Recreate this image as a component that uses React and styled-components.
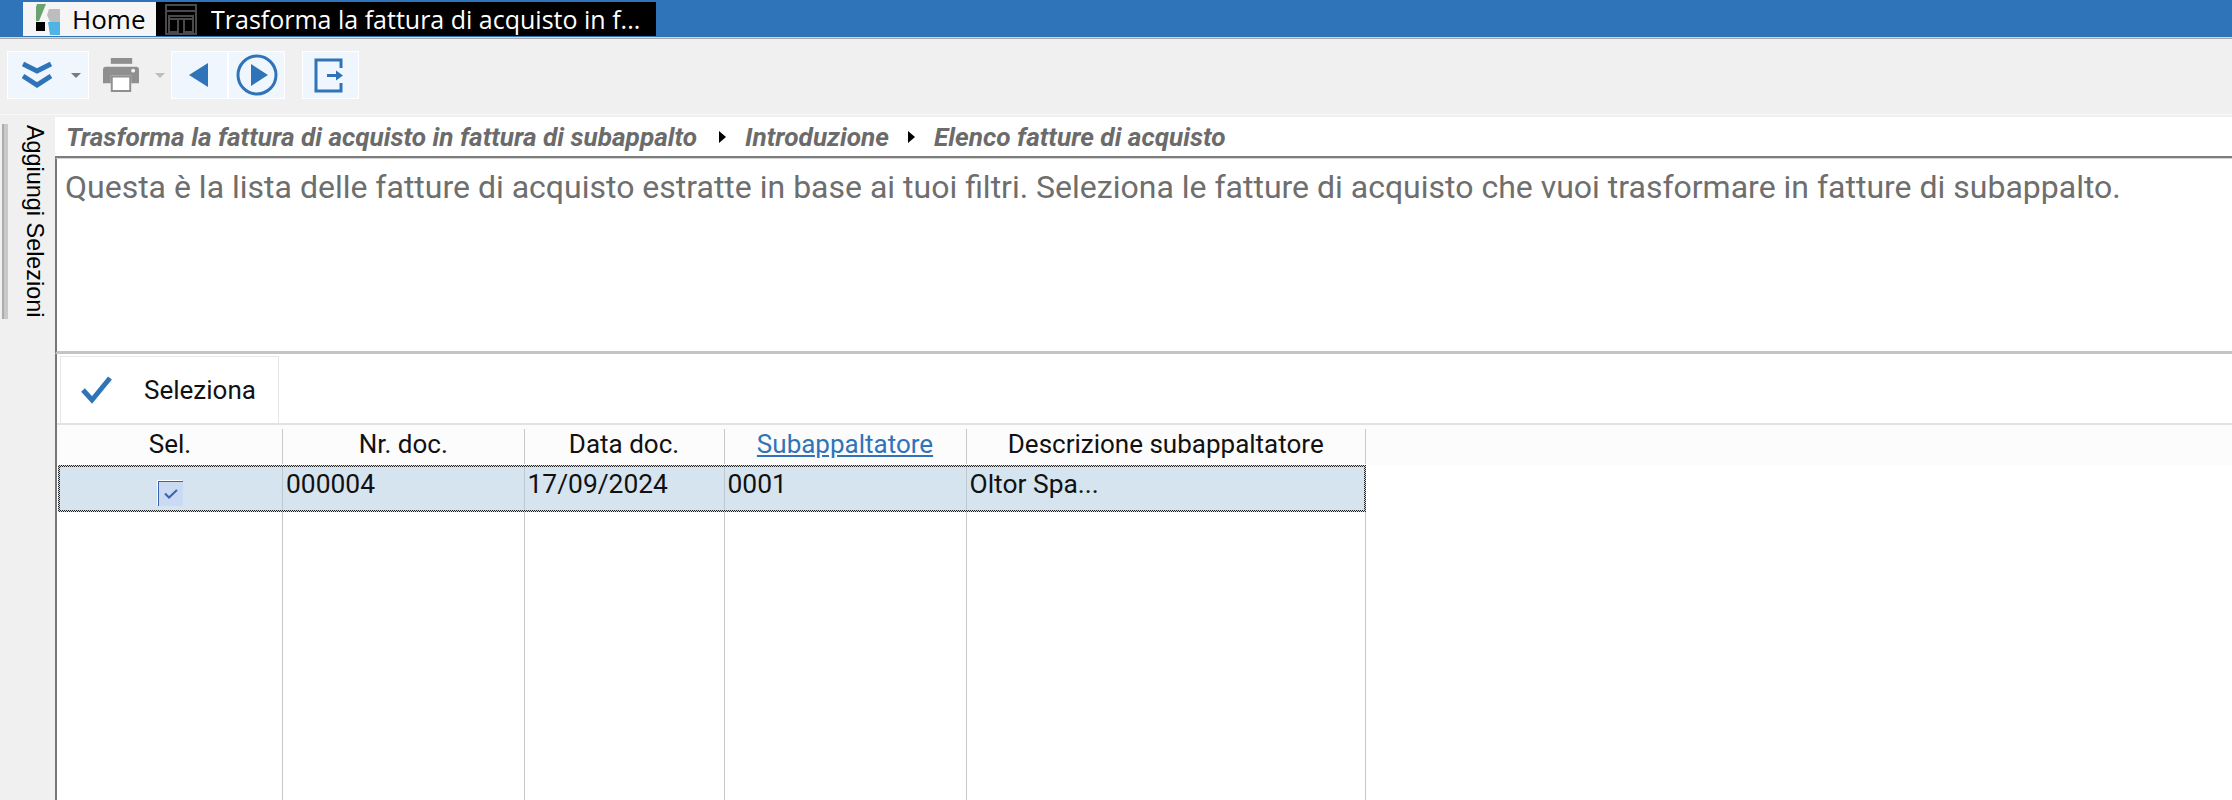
import React from "react";
import styled, { createGlobalStyle } from "styled-components";

const GlobalStyle = createGlobalStyle`
  html, body {
    margin: 0;
    padding: 0;
    height: 800px;
    overflow: hidden;
    background: #f0f0f0;
  }
`;

const Page = styled.div`
  width: 2232px;
  height: 800px;
  display: flex;
  flex-direction: column;
  background: #f0f0f0;
  font-family: Roboto, sans-serif;
`;

const TabBar = styled.div`
  height: 38px;
  flex: none;
  box-sizing: border-box;
  padding: 2px 0 1px 23px;
  display: flex;
  background: #2f74b9;
  border-bottom: 1px solid #d8d8d8;
`;

const Tab = styled.div`
  display: flex;
  align-items: center;
  box-sizing: border-box;
  width: ${(p) => p.$width}px;
  padding-left: ${(p) => p.$pad}px;
  gap: ${(p) => p.$gap}px;
  background: ${(p) => (p.$dark ? "#000" : "#f5f5f5")};
  color: ${(p) => (p.$dark ? "#fff" : "#000")};
  font-family: "Open Sans", sans-serif;
  font-size: ${(p) => p.$size}px;
  white-space: nowrap;
`;

const ToolBar = styled.div`
  height: 77px;
  flex: none;
  box-sizing: border-box;
  padding: 12px 0 0 7px;
  display: flex;
  align-items: flex-start;
  background: #f0f0f0;
  border-top: 1px solid #a8a8a8;
  border-bottom: 1px solid #f8f8f8;
`;

const ToolButton = styled.div`
  width: ${(p) => p.$width}px;
  height: 48px;
  margin-left: ${(p) => p.$left || 0}px;
  padding-left: ${(p) => p.$shift || 0}px;
  padding-right: ${(p) => p.$back || 0}px;
  flex: none;
  box-sizing: border-box;
  display: flex;
  align-items: center;
  justify-content: center;
  gap: ${(p) => p.$gap || 0}px;
  background: ${(p) => (p.$plain ? "transparent" : "#eff6fd")};
  border: 1px solid ${(p) => (p.$plain ? "transparent" : "#fff")};
`;

const Caret = styled.span`
  width: 0;
  height: 0;
  border-left: 5px solid transparent;
  border-right: 5px solid transparent;
  border-top: 5px solid ${(p) => p.$color};
`;

const Body = styled.div`
  flex: 1;
  min-height: 0;
  display: flex;
  margin-top: 2px;
`;

const SideRail = styled.div`
  width: 55px;
  flex: none;
  display: flex;
  padding-top: 7px;
  box-sizing: border-box;
  align-items: flex-start;
`;

const SideGrip = styled.div`
  width: 6px;
  height: 195px;
  margin-left: 2px;
  flex: none;
  background: linear-gradient(90deg, #acacac 0 2px, #c9c9c9 2px);
`;

const SideLabel = styled.div`
  writing-mode: vertical-rl;
  margin-left: 16px;
  padding-top: 1px;
  font-family: "Liberation Sans", sans-serif;
  font-size: 23.4px;
  line-height: 22px;
  color: #000;
  white-space: nowrap;
`;

const Main = styled.div`
  flex: 1;
  min-width: 0;
  display: flex;
  flex-direction: column;
  background: #fff;
`;

const Crumbs = styled.div`
  height: 41px;
  flex: none;
  box-sizing: border-box;
  padding-left: 11px;
  display: flex;
  align-items: center;
  border-bottom: 2px solid #7d7d7d;
  color: #6b6b6b;
  font-size: 26.2px;
  font-weight: 700;
  font-style: italic;
  white-space: nowrap;
`;

const CrumbArrow = styled.span`
  width: 0;
  height: 0;
  margin: 0 ${(p) => p.$after}px 0 ${(p) => p.$before}px;
  border-top: 6.5px solid transparent;
  border-bottom: 6.5px solid transparent;
  border-left: 7px solid #000;
`;

const Intro = styled.div`
  height: 196px;
  flex: none;
  box-sizing: border-box;
  padding: 9px 0 0 8px;
  border-top: 1px solid #d4d4d4;
  border-left: 2px solid #777;
  border-bottom: 3px solid #c4c4c4;
  color: #6e6e6e;
  font-size: 32px;
  line-height: 38px;
  white-space: nowrap;
`;

const Content = styled.div`
  flex: 1;
  min-height: 0;
  display: flex;
  flex-direction: column;
  border-left: 2px solid #777;
`;

const ActionBar = styled.div`
  height: 71px;
  flex: none;
  box-sizing: border-box;
  padding: 2px 0 0 3px;
  border-bottom: 2px solid #e2e2e2;
`;

const ActionButton = styled.div`
  width: 219px;
  height: 67px;
  box-sizing: border-box;
  display: flex;
  align-items: center;
  padding-left: 20px;
  gap: 31px;
  border: 1px solid #e6e6e6;
  border-bottom: none;
  font-size: 26px;
  color: #111;
`;

const columns = "225px 241.5px 200px 242px 399.5px";

const Head = styled.div`
  height: 40px;
  flex: none;
  display: grid;
  grid-template-columns: ${columns} 1fr;
  padding-left: 1px;
  box-sizing: border-box;
  background: #fcfcfc;
`;

const HeadCell = styled.div`
  display: flex;
  align-items: center;
  justify-content: center;
  margin: 4px 0;
  padding-bottom: 5px;
  border-right: ${(p) => (p.$last ? "none" : "1px solid #c8c8c8")};
  font-size: 26px;
  color: ${(p) => (p.$link ? "#2f74b9" : "#111")};
  text-decoration: ${(p) => (p.$link ? "underline" : "none")};
`;

const Grid = styled.div`
  flex: 1;
  min-height: 0;
  display: flex;
  flex-direction: column;
  padding-left: 1px;
`;

const Row = styled.div`
  height: 47px;
  flex: none;
  box-sizing: border-box;
  display: grid;
  grid-template-columns: ${columns};
  width: 1308px;
  background: #d6e4f0;
  position: relative;

  /* focus frame, dithered like the old windows dotted rect */
  &::after {
    content: "";
    position: absolute;
    inset: 0;
    padding: 2px;
    background: repeating-conic-gradient(#222 0 25%, #d4d8dc 0 50%) 0 0 / 2px 2px;
    mask: linear-gradient(#000 0 0) content-box exclude, linear-gradient(#000 0 0);
    pointer-events: none;
  }
`;

const Cell = styled.div`
  box-sizing: border-box;
  padding: 4px 0 0 3px;
  border-right: ${(p) => (p.$last ? "none" : "1px solid #c0c8cf")};
  font-size: 26.4px;
  color: #111;
`;

const CheckCell = styled(Cell)`
  display: flex;
  justify-content: center;
  padding: 16px 0 0;
`;

const Check = styled.div`
  width: 25px;
  height: 25px;
  box-sizing: border-box;
  display: flex;
  align-items: center;
  justify-content: center;
  background: #c9daf2;
  border-top: 1px solid #3a63b4;
  border-left: 1px solid #3a63b4;
  box-shadow: -1px -1px 0 #fff;
`;

const Filler = styled.div`
  flex: 1;
  display: grid;
  grid-template-columns: ${columns};
  width: 1308px;
`;

const FillerCol = styled.div`
  border-right: 1px solid #c8c8c8;
`;

const Logo = () => (
  <svg width="24" height="31" viewBox="0 0 24 31">
    <path d="M0 3L1 0h9L3 17H0z" fill="#6aa36f" />
    <path d="M13 5h11v13H14l-3-7z" fill="#bdbdbd" />
    <path d="M0 18h9v9H0z" fill="#000" />
    <path d="M12 18h12v13H14z" fill="#4fb3e3" />
  </svg>
);

const WindowIcon = () => (
  <svg width="32" height="31" viewBox="0 0 32 31" fill="none" stroke="#4a4a4a" strokeWidth="2">
    <rect x="1" y="1" width="30" height="29" />
    <path d="M1 7h30M4 12h24v3H4zM4 15h9v13H4zM19 15h9v13h-9z" />
  </svg>
);

const ChevronsIcon = () => (
  <svg width="30" height="28" viewBox="0 0 30 28" fill="none" stroke="#2f74b9" strokeWidth="5">
    <path d="M1 3l14 7 14-7M1 15l14 9 14-9" />
  </svg>
);

const PrintIcon = () => (
  <svg width="36" height="35" viewBox="0 0 37 36">
    <path d="M8 0h22v6H8z" fill="#8f8f8f" />
    <path d="M3 9h31a3 3 0 0 1 3 3v14h-8v-8H8v8H0V12a3 3 0 0 1 3-3z" fill="#8f8f8f" />
    <path d="M9 19h19v15H9z" fill="#fff" stroke="#8f8f8f" strokeWidth="2" />
    <circle cx="31" cy="13" r="2" fill="#f4f4f4" />
  </svg>
);

const BackIcon = () => (
  <svg width="20" height="24" viewBox="0 0 20 24">
    <path d="M19 0v24L0 12z" fill="#2f74b9" />
  </svg>
);

const PlayIcon = () => (
  <svg width="42" height="42" viewBox="0 0 42 42">
    <circle cx="21" cy="21" r="19" fill="none" stroke="#2f74b9" strokeWidth="3" />
    <path d="M15 10l17 11-17 11z" fill="#2f74b9" />
  </svg>
);

const ExitIcon = () => (
  <svg width="30" height="35" viewBox="0 0 30 35" fill="none" stroke="#2f74b9" strokeWidth="3">
    <path d="M27 10V2H2v31h25v-8" />
    <path d="M13 17.5h13" />
    <path d="M22 12.5l7 5-7 5z" fill="#2f74b9" stroke="none" />
  </svg>
);

const CheckMark = () => (
  <svg width="32" height="28" viewBox="0 0 32 28" fill="none" stroke="#2f74b9" strokeWidth="5">
    <path d="M2 14l9 10L29 2" />
  </svg>
);

const TinyCheck = () => (
  <svg width="14" height="10" viewBox="0 0 14 10" fill="none" stroke="#3a63b4" strokeWidth="2">
    <path d="M1 4.5l4 4 8-7.5" />
  </svg>
);

const rowCols = ["000004", "17/09/2024", "0001", "Oltor Spa..."];

export default function App() {
  return (
    <Page>
      <GlobalStyle />
      <TabBar>
        <Tab $width={133} $pad={13} $gap={12} $size={26}>
          <Logo />
          Home
        </Tab>
        <Tab $dark $width={500} $pad={9} $gap={14} $size={25}>
          <WindowIcon />
          Trasforma la fattura di acquisto in f...
        </Tab>
      </TabBar>
      <ToolBar>
        <ToolButton $width={82} $gap={19} $shift={6}>
          <ChevronsIcon />
          <Caret $color="#7a7a7a" />
        </ToolButton>
        <ToolButton $plain $width={82} $gap={16} $shift={8}>
          <PrintIcon />
          <Caret $color="#bdbdbd" />
        </ToolButton>
        <ToolButton $width={57} $back={2}>
          <BackIcon />
        </ToolButton>
        <ToolButton $width={57}>
          <PlayIcon />
        </ToolButton>
        <ToolButton $width={57} $left={17} $back={4}>
          <ExitIcon />
        </ToolButton>
      </ToolBar>
      <Body>
        <SideRail>
          <SideGrip />
          <SideLabel>Aggiungi Selezioni</SideLabel>
        </SideRail>
        <Main>
          <Crumbs>
            Trasforma la fattura di acquisto in fattura di subappalto
            <CrumbArrow $before={22} $after={19} />
            Introduzione
            <CrumbArrow $before={19} $after={19} />
            Elenco fatture di acquisto
          </Crumbs>
          <Intro>
            Questa è la lista delle fatture di acquisto estratte in base ai tuoi filtri. Seleziona le fatture di acquisto che vuoi trasformare in fatture di subappalto.
          </Intro>
          <Content>
            <ActionBar>
              <ActionButton>
                <CheckMark />
                Seleziona
              </ActionButton>
            </ActionBar>
            <Head>
              <HeadCell>Sel.</HeadCell>
              <HeadCell>Nr. doc.</HeadCell>
              <HeadCell>Data doc.</HeadCell>
              <HeadCell $link>Subappaltatore</HeadCell>
              <HeadCell>Descrizione subappaltatore</HeadCell>
              <HeadCell $last />
            </Head>
            <Grid>
              <Row>
                <CheckCell>
                  <Check>
                    <TinyCheck />
                  </Check>
                </CheckCell>
                {rowCols.map((text, i) => (
                  <Cell key={text} $last={i === rowCols.length - 1}>
                    {text}
                  </Cell>
                ))}
              </Row>
              <Filler>
                <FillerCol />
                <FillerCol />
                <FillerCol />
                <FillerCol />
                <FillerCol />
              </Filler>
            </Grid>
          </Content>
        </Main>
      </Body>
    </Page>
  );
}
